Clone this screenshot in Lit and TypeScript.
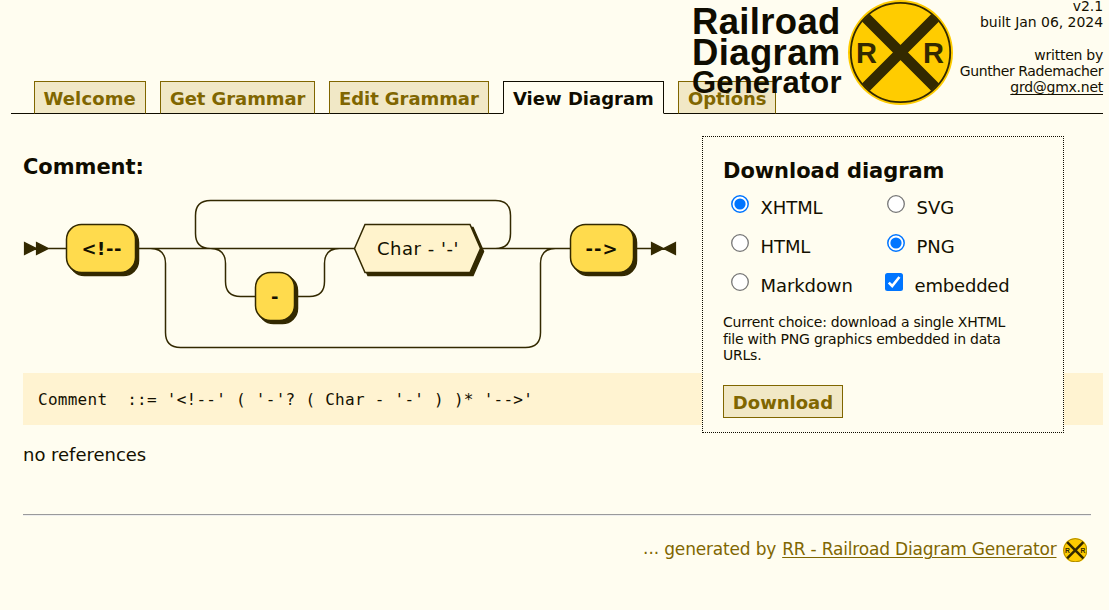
import { LitElement, html, svg, css } from "lit";
import { customElement } from "lit/decorators.js";

const sign = svg`
  <circle cx="52.5" cy="52.5" r="52.5" fill="#ffcc00"/>
  <circle cx="52.5" cy="52.5" r="49.7" fill="none" stroke="#332900" stroke-width="1.8"/>
  <path d="M17.8 17.8 L87.2 87.2 M87.2 17.8 L17.8 87.2" stroke="#332900" stroke-width="10.8"/>
  <text x="8.1" y="62.8" class="r">R</text>
  <text x="75" y="62.8" class="r">R</text>`;

@customElement("app-root")
export class AppRoot extends LitElement {
  static styles = css`
    :host { display: block; position: relative; height: 610px; overflow: hidden; box-sizing: border-box;
      padding: 81px 6px 0 11px; background: #fffdf0; color: #141000;
      font-family: Verdana, "DejaVu Sans", sans-serif; font-size: 18px; line-height: 22px; }
    .tabs { display: flex; gap: 14px; padding-left: 23px; height: 32px; border-bottom: 1px solid #0f0c00; }
    .tab { box-sizing: border-box; height: 33px; border: 1px solid #806600; border-bottom-color: #0f0c00; background: #f1e8c6;
      color: #806600; font-weight: bold; padding: 6px 0 0 9px; white-space: nowrap; letter-spacing: -0.07px; }
    .tab.on { background: #fffdf0; color: #0f0c00; border-color: #0f0c00; border-bottom-color: #fffdf0; }
    .w1 { width: 112px; letter-spacing: 0.1px; padding-left: 8.5px; } .w2 { width: 155px; } .w3 { width: 160px; }
    .w4 { width: 161px; letter-spacing: 0; } .w5 { width: 98px; }
    .brand { position: absolute; right: 6px; top: 0; display: flex; }
    .logo { display: block; width: 262px; height: 106px; }
    .word { font: bold 36.5px "Liberation Sans", Arial, sans-serif; fill: #0f0c00; }
    .word.sm { font-size: 31px; }
    .r { font: bold 29px "Liberation Sans", Arial, sans-serif; fill: #332900; }
    .about { width: 149px; text-align: right; font-size: 14px; line-height: 16.3px; white-space: nowrap; margin-top: -2px; letter-spacing: -0.05px; }
    .about u { text-underline-offset: 2px; letter-spacing: -0.26px; }
    .author { letter-spacing: -0.4px; }
    .by { letter-spacing: -0.25px; }
    .page { padding: 0 0 0 12px; }
    h2 { margin: 0; font-size: 21px; line-height: 26px; font-weight: bold; color: #0f0c00; }
    .page > h2 { padding-top: 40px; height: 45px; letter-spacing: -0.05px; }
    .diagram { display: block; width: 656px; height: 152px; }
    .t { font: bold 12px Verdana, "DejaVu Sans", sans-serif; fill: #141000; }
    .t.n { font-weight: normal; }
    .track { fill: none; stroke: #332900; stroke-width: 1; }
    .ends, .shadow { fill: #332900; stroke: #332900; stroke-width: 1; }
    .ends { stroke-width: 0.8; }
    .term { fill: #ffdb4d; stroke: #332900; }
    .regexp { fill: #fff3cc; stroke: #332900; }
    .ebnf { margin-top: 22px; height: 52px; box-sizing: border-box; padding: 16px 15px 0; background: #fff3d1; white-space: pre;
      font: 16px/22px "DejaVu Sans Mono", monospace; letter-spacing: 0.27px; }
    .refs { margin-top: 19px; letter-spacing: -0.02px; }
    .rule { margin: 48px 12px 0 0; height: 2px; box-sizing: border-box; border-top: 1px solid #9a9a9a; border-bottom: 1px solid #eeeeee; }
    .foot { display: flex; justify-content: flex-end; align-items: center; margin: 22px 16px 0 0; height: 24px;
      color: #806600; font-size: 17px; white-space: nowrap; }
    .foot span, .foot a { position: relative; top: -1px; }
    .foot span { letter-spacing: -0.1px; }
    .dots { letter-spacing: 0.8px; }
    .foot .gen { letter-spacing: -0.18px; }
    .foot a { text-decoration: underline; text-underline-offset: 2px; margin: 0 6px; letter-spacing: -0.19px; }
    .mini { width: 24.5px; height: 24.5px; }
    .panel { position: absolute; left: 702px; top: 136px; width: 362px; height: 297px; box-sizing: border-box;
      border: 1px dotted #0f0c00; background: #fffdf0; padding: 21px 20px 0; }
    .panel h2 { letter-spacing: -0.05px; }
    .opts { display: grid; grid-template-columns: 156px 150px; grid-auto-rows: 39px; margin: 8px 0 0 7.6px; }
    .opt { display: flex; align-items: flex-start; gap: 12px; letter-spacing: -0.1px; }
    .opt svg { width: 18px; height: 18px; margin-top: 3px; flex: none; }
    .opt span { padding-top: 4.5px; }
    .opt.box { margin-left: -2px; letter-spacing: -0.2px; }
    .note { margin-top: 5px; font-size: 14px; line-height: 16.5px; width: 296px; letter-spacing: -0.23px; }
    .btn { box-sizing: border-box; margin-top: 21px; width: 120px; height: 33px; border: 1px solid #806600; background: #f1e8c6;
      color: #806600; font-weight: bold; text-align: center; padding-top: 6px; }
  `;

  radio(label: string, on: boolean) {
    return html`<label class="opt"><svg viewBox="0 0 18 18">${on
      ? svg`<circle cx="9" cy="9" r="8.2" fill="#fff" stroke="#0075ff" stroke-width="1.5"/><circle cx="9" cy="9" r="5.6" fill="#0075ff"/>`
      : svg`<circle cx="9" cy="9" r="8.3" fill="#fff" stroke="#767676" stroke-width="1.3"/>`}</svg><span>${label}</span></label>`;
  }

  render() {
    return html`
      <nav class="tabs">
        <div class="tab w1">Welcome</div>
        <div class="tab w2">Get Grammar</div>
        <div class="tab w3">Edit Grammar</div>
        <div class="tab on w4">View Diagram</div>
        <div class="tab w5">Options</div>
      </nav>
      <main class="page">
        <h2>Comment:</h2>
        <svg class="diagram" viewBox="0 0 437.33 101.33">
          <path class="ends" d="M9 33L1 29V37ZM17 33L9 29V37ZM427 33L419 29V37ZM427 33L435 29V37Z"/>
          <path class="track" d="M17 33H419M125 33Q115 33 115 23V11Q115 1 125 1H315Q325 1 325 11V23Q325 33 315 33
            M125 33Q135 33 135 43V55Q135 65 145 65H191Q201 65 201 55V43Q201 33 211 33
            M85 33Q95 33 95 43V89Q95 99 105 99H335Q345 99 345 89V43Q345 33 355 33"/>
          <rect class="shadow" x="31" y="19" width="46" height="32" rx="10"/>
          <rect class="term" x="29" y="17" width="46" height="32" rx="10"/>
          <text class="t" x="39" y="37" textLength="26.6">&lt;!--</text>
          <rect class="shadow" x="157" y="51" width="26" height="32" rx="10"/>
          <rect class="term" x="155" y="49" width="26" height="32" rx="10"/>
          <text class="t" x="165.3" y="69">-</text>
          <path class="shadow" d="M223 35L230 19H300L307 35L300 51H230Z"/>
          <path class="regexp" d="M221 33L228 17H298L305 33L298 49H228Z"/>
          <text class="t n" x="236" y="37" textLength="54.3">Char - '-'</text>
          <rect class="shadow" x="367" y="19" width="42" height="32" rx="10"/>
          <rect class="term" x="365" y="17" width="42" height="32" rx="10"/>
          <text class="t" x="375" y="37" textLength="21.4">--&gt;</text>
        </svg>
        <div class="ebnf">Comment  ::= '&lt;!--' ( '-'? ( Char - '-' ) )* '--&gt;'</div>
        <div class="refs">no references</div>
        <div class="rule"></div>
        <footer class="foot"><span class="gen"><span class="dots">...</span> generated by</span><a>RR - Railroad Diagram Generator</a><svg class="mini" viewBox="0 0 105 105">${sign}</svg></footer>
      </main>
      <div class="brand">
        <svg class="logo" viewBox="0 0 262 106">
          <text class="word" x="0" y="33.7" textLength="148.3">Railroad</text>
          <text class="word" x="0" y="64.7" textLength="148.3">Diagram</text>
          <text class="word sm" x="0" y="92.6" textLength="149.5">Generator</text>
          <g transform="translate(156 0)">${sign}</g>
        </svg>
        <div class="about">v2.1<br>built Jan 06, 2024<br><br><span class="by">written by</span><br><span class="author">Gunther Rademacher</span><br><u>grd@gmx.net</u></div>
      </div>
      <section class="panel">
        <h2>Download diagram</h2>
        <div class="opts">
          ${this.radio("XHTML", true)}${this.radio("SVG", false)}
          ${this.radio("HTML", false)}${this.radio("PNG", true)}
          ${this.radio("Markdown", false)}
          <label class="opt box"><svg viewBox="0 0 18 18"><rect width="18" height="18" rx="2.5" fill="#0075ff"/><path d="M3.8 9.6L7.2 13L14.4 4" fill="none" stroke="#fff" stroke-width="2.6"/></svg><span>embedded</span></label>
        </div>
        <div class="note">Current choice: download a single XHTML file with PNG graphics embedded in data URLs.</div>
        <div class="btn">Download</div>
      </section>`;
  }
}
